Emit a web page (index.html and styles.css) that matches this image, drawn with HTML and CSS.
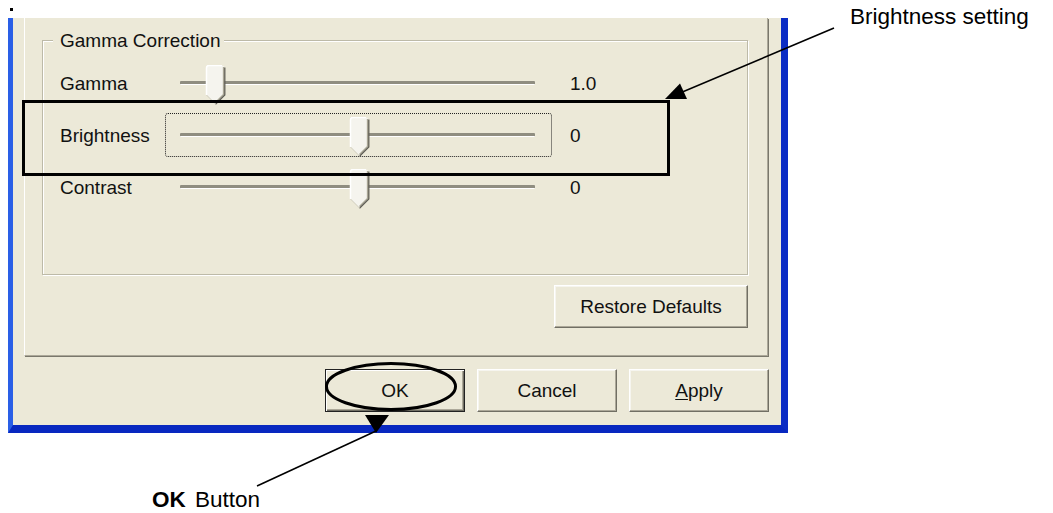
FILE: index.html
```html
<!DOCTYPE html>
<html lang="en">
<head>
    <meta charset="UTF-8">
    <title>Gamma Correction</title>
    <link rel="stylesheet" href="styles.css">
</head>
<body>
    <svg width="0" height="0" class="defs">
        <symbol id="thumb" viewBox="0 0 21 40">
            <path d="M1.5 30 V3 Q1.5 0.5 4 0.5 H17 Q19.5 0.5 19.5 3 V30 L10.5 39 Z" fill="#f5f4ee"/>
            <path d="M1.5 30 V3 Q1.5 0.5 4 0.5 H17" fill="none" stroke="#fff" stroke-width="1.5"/>
            <path d="M18.5 2 V29.5 L10.5 37.5" fill="none" stroke="#a9a695" stroke-width="1.3"/>
            <path d="M19.8 2.5 V30 L10.5 39.3" fill="none" stroke="#5f5d54" stroke-width="1.3"/>
            <path d="M1.5 30 L10.5 39" fill="none" stroke="#cfccbd" stroke-width="1"/>
        </symbol>
    </svg>

    <div class="stage">
        <div class="dot"></div>

        <div class="window">
            <div class="panel">
                <fieldset class="group">
                    <legend>Gamma Correction</legend>

                    <div class="row">
                        <span class="label">Gamma</span>
                        <div class="slider">
                            <div class="track"></div>
                            <svg class="thumb" style="left: 39px;"><use href="#thumb"/></svg>
                        </div>
                        <span class="value">1.0</span>
                    </div>

                    <div class="row">
                        <span class="label">Brightness</span>
                        <div class="slider focused">
                            <div class="track"></div>
                            <svg class="thumb" style="left: 183px;"><use href="#thumb"/></svg>
                        </div>
                        <span class="value">0</span>
                    </div>

                    <div class="row">
                        <span class="label">Contrast</span>
                        <div class="slider">
                            <div class="track"></div>
                            <svg class="thumb" style="left: 183px;"><use href="#thumb"/></svg>
                        </div>
                        <span class="value">0</span>
                    </div>
                </fieldset>

                <div class="restore-row">
                    <button class="btn wide">Restore Defaults</button>
                </div>
            </div>

            <div class="buttons">
                <button class="btn default">OK</button>
                <button class="btn">Cancel</button>
                <button class="btn"><u>A</u>pply</button>
            </div>
        </div>

        <!-- callouts drawn over the dialog -->
        <svg class="marks" width="1053" height="513" viewBox="0 0 1053 513">
            <rect x="23.5" y="101.5" width="645" height="73" fill="none" stroke="#000" stroke-width="3"/>
            <line x1="834" y1="28" x2="680" y2="93" stroke="#000" stroke-width="1.6"/>
            <polygon points="665,99 680,83.5 687,99" fill="#000"/>
            <ellipse cx="391" cy="386.5" rx="64.5" ry="23" fill="none" stroke="#000" stroke-width="3"/>
            <line x1="257" y1="486" x2="376" y2="431" stroke="#000" stroke-width="1.6"/>
            <polygon points="365,415 389,415 376,433" fill="#000"/>
        </svg>

        <div class="note note-brightness">Brightness setting</div>
        <div class="note note-ok"><b>OK</b> Button</div>
    </div>
</body>
</html>
```

FILE: styles.css
```css
body {
    margin: 0;
    background: #fff;
    font-family: "Liberation Sans", Arial, sans-serif;
}
.defs {
    position: absolute;
}
.stage {
    position: relative;
    width: 1053px;
    height: 513px;
    overflow: hidden;
    padding: 18px 0 0 8px;
    box-sizing: border-box;
}
.dot {
    position: absolute;
    left: 10px;
    top: 8px;
    width: 3px;
    height: 3px;
    background: #000;
}
.window {
    width: 780px;
    height: 415px;
    box-sizing: border-box;
    background: #ece9d8;
    border-left: 5px solid #2a5fe6;
    border-right: 7px solid #0b2cc4;
    border-bottom: 8px solid #0828c0;
    display: flex;
    flex-direction: column;
    font-size: 19px;
    color: #111;
}
.panel {
    margin: 0 13px 0 11px;
    padding: 13px 19px 27px 17px;
    border-left: 1px solid #fff;
    border-right: 1px solid #aca899;
    border-bottom: 1px solid #aca899;
    box-shadow: 1px 1px 0 #7a786c;
}
.group {
    margin: 0;
    padding: 11px 0 65px 17px;
    border: 1px solid #bdbaa8;
    box-shadow: inset 1px 1px 0 #fff, 1px 1px 0 #fff;
    min-width: 0;
}
.group legend {
    margin-left: -7px;
    padding: 0 3px 0 7px;
    line-height: 19px;
    background: #ece9d8;
}
.row {
    display: grid;
    grid-template-columns: 87px 387px auto;
    column-gap: 18px;
    align-items: center;
    height: 44px;
    margin-bottom: 8px;
    line-height: 19px;
}
.row:last-child {
    margin-bottom: 0;
}
.slider {
    position: relative;
    height: 44px;
    box-sizing: border-box;
    border: 1px dotted transparent;
    border-radius: 3px;
}
.slider.focused {
    border-color: #222;
}
.track {
    position: absolute;
    left: 14px;
    right: 16px;
    top: 19px;
    height: 3px;
    background: #8f8d80;
    border-bottom: 1px solid #fff;
    border-radius: 1px;
}
.thumb {
    position: absolute;
    top: 3px;
    width: 21px;
    height: 40px;
}
.restore-row {
    display: flex;
    justify-content: flex-end;
    margin-top: 10px;
}
.buttons {
    display: flex;
    justify-content: flex-end;
    gap: 12px;
    margin-top: 13px;
    padding-right: 12px;
}
.btn {
    width: 140px;
    height: 43px;
    padding: 0;
    font-family: "Liberation Sans", Arial, sans-serif;
    font-size: 19px;
    color: #111;
    background: #ece9d8;
    border: 1px solid;
    border-color: #fff #716f64 #716f64 #fff;
    box-shadow: inset -1px -1px 0 #aca899, inset 1px 1px 0 #f6f5ef;
}
.btn.wide {
    width: 194px;
}
.btn.default {
    border-color: #222;
    box-shadow: inset 1px 1px 0 #fff, inset -1px -1px 0 #716f64, inset -2px -2px 0 #aca899;
}
.btn u {
    text-decoration-thickness: 1px;
    text-underline-offset: 2px;
}
.marks {
    position: absolute;
    left: 0;
    top: 0;
}
.note {
    position: absolute;
    font-family: "Liberation Sans", Arial, sans-serif;
    line-height: 1;
    color: #000;
    white-space: nowrap;
}
.note-brightness {
    left: 850px;
    top: 6px;
    font-size: 22.5px;
}
.note-ok {
    left: 152px;
    top: 489px;
    font-size: 22.5px;
    word-spacing: 3px;
}
```
